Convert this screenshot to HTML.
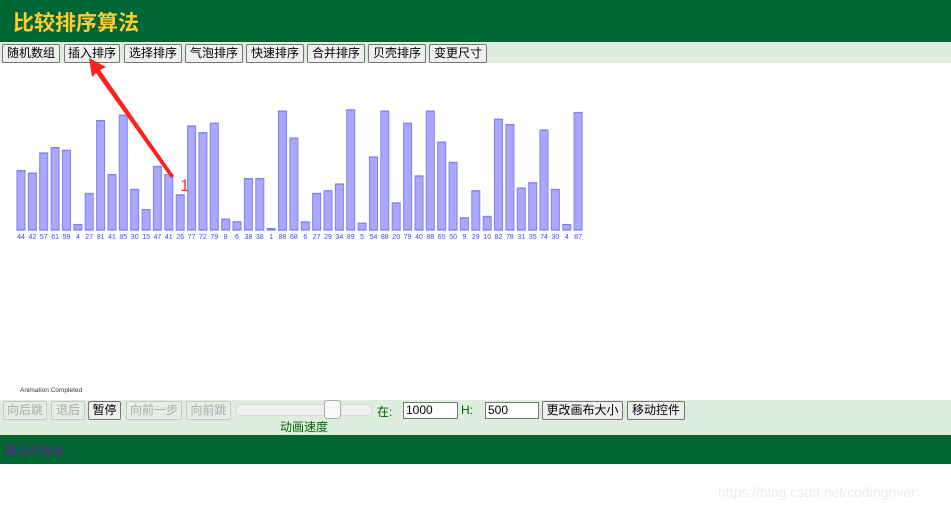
<!DOCTYPE html>
<html><head><meta charset="utf-8"><style>
body{margin:0;width:951px;height:511px;background:#fff;font-family:"Liberation Sans","Noto Sans CJK SC",sans-serif;position:relative;overflow:hidden}
.hd{position:absolute;left:0;top:0;width:951px;height:42px;background:#006633}
.hd h1{margin:0;position:absolute;left:13px;top:7px;font-size:21px;color:#ffcc33;font-weight:bold;letter-spacing:0}
.tb{position:absolute;left:0;top:42px;width:951px;height:21px;background:#ddeedd}
.b{position:absolute;height:19px;box-sizing:border-box;border:1px solid #767676;border-radius:2px;background:#efefef;font-size:12px;line-height:17px;text-align:center;color:#000;padding:0}
.dis{color:#aaa;border-color:#c8c8c8;background:#e6ece6}
.cb{position:absolute;left:0;top:400px;width:951px;height:35px;background:#ddeedd}
.ft{position:absolute;left:0;top:435px;width:951px;height:29px;background:#006633}
.in{position:absolute;height:17px;box-sizing:border-box;border:1px solid #767676;background:#fff;font-size:12px;line-height:15px;padding-left:2px}
</style></head><body>
<div class="hd"><h1>比较排序算法</h1></div>
<div class="tb">
<div class="b" style="left:2px;top:2px;width:58px">随机数组</div>
<div class="b" style="left:64px;top:2px;width:56px">插入排序</div>
<div class="b" style="left:124px;top:2px;width:58px">选择排序</div>
<div class="b" style="left:185px;top:2px;width:58px">气泡排序</div>
<div class="b" style="left:246px;top:2px;width:58px">快速排序</div>
<div class="b" style="left:307px;top:2px;width:58px">合并排序</div>
<div class="b" style="left:368px;top:2px;width:58px">贝壳排序</div>
<div class="b" style="left:429px;top:2px;width:58px">变更尺寸</div>
</div>
<svg style="position:absolute;left:0;top:0" width="951" height="400">
<g transform="translate(0,230) scale(1,-1.35)" fill="#a8a8ff" stroke="#8080f0" stroke-width="1" vector-effect="non-scaling-stroke">
<rect x="17" y="0" width="8" height="44"/><rect x="28.4" y="0" width="8" height="42"/><rect x="39.7" y="0" width="8" height="57"/><rect x="51.1" y="0" width="8" height="61"/><rect x="62.5" y="0" width="8" height="59"/><rect x="73.9" y="0" width="8" height="4"/><rect x="85.2" y="0" width="8" height="27"/><rect x="96.6" y="0" width="8" height="81"/><rect x="108" y="0" width="8" height="41"/><rect x="119.3" y="0" width="8" height="85"/><rect x="130.7" y="0" width="8" height="30"/><rect x="142.1" y="0" width="8" height="15"/><rect x="153.4" y="0" width="8" height="47"/><rect x="164.8" y="0" width="8" height="41"/><rect x="176.2" y="0" width="8" height="26"/><rect x="187.6" y="0" width="8" height="77"/><rect x="198.9" y="0" width="8" height="72"/><rect x="210.3" y="0" width="8" height="79"/><rect x="221.7" y="0" width="8" height="8"/><rect x="233" y="0" width="8" height="6"/><rect x="244.4" y="0" width="8" height="38"/><rect x="255.8" y="0" width="8" height="38"/><rect x="267.1" y="0" width="8" height="1"/><rect x="278.5" y="0" width="8" height="88"/><rect x="289.9" y="0" width="8" height="68"/><rect x="301.3" y="0" width="8" height="6"/><rect x="312.6" y="0" width="8" height="27"/><rect x="324" y="0" width="8" height="29"/><rect x="335.4" y="0" width="8" height="34"/><rect x="346.7" y="0" width="8" height="89"/><rect x="358.1" y="0" width="8" height="5"/><rect x="369.5" y="0" width="8" height="54"/><rect x="380.8" y="0" width="8" height="88"/><rect x="392.2" y="0" width="8" height="20"/><rect x="403.6" y="0" width="8" height="79"/><rect x="415" y="0" width="8" height="40"/><rect x="426.3" y="0" width="8" height="88"/><rect x="437.7" y="0" width="8" height="65"/><rect x="449.1" y="0" width="8" height="50"/><rect x="460.4" y="0" width="8" height="9"/><rect x="471.8" y="0" width="8" height="29"/><rect x="483.2" y="0" width="8" height="10"/><rect x="494.5" y="0" width="8" height="82"/><rect x="505.9" y="0" width="8" height="78"/><rect x="517.3" y="0" width="8" height="31"/><rect x="528.7" y="0" width="8" height="35"/><rect x="540" y="0" width="8" height="74"/><rect x="551.4" y="0" width="8" height="30"/><rect x="562.8" y="0" width="8" height="4"/><rect x="574.1" y="0" width="8" height="87"/>
</g>
<g font-size="7" fill="#4040ff" text-anchor="middle" font-family="Liberation Sans,sans-serif">
<text x="21" y="239">44</text><text x="32.4" y="239">42</text><text x="43.7" y="239">57</text><text x="55.1" y="239">61</text><text x="66.5" y="239">59</text><text x="77.9" y="239">4</text><text x="89.2" y="239">27</text><text x="100.6" y="239">81</text><text x="112" y="239">41</text><text x="123.3" y="239">85</text><text x="134.7" y="239">30</text><text x="146.1" y="239">15</text><text x="157.4" y="239">47</text><text x="168.8" y="239">41</text><text x="180.2" y="239">26</text><text x="191.6" y="239">77</text><text x="202.9" y="239">72</text><text x="214.3" y="239">79</text><text x="225.7" y="239">8</text><text x="237" y="239">6</text><text x="248.4" y="239">38</text><text x="259.8" y="239">38</text><text x="271.1" y="239">1</text><text x="282.5" y="239">88</text><text x="293.9" y="239">68</text><text x="305.3" y="239">6</text><text x="316.6" y="239">27</text><text x="328" y="239">29</text><text x="339.4" y="239">34</text><text x="350.7" y="239">89</text><text x="362.1" y="239">5</text><text x="373.5" y="239">54</text><text x="384.8" y="239">88</text><text x="396.2" y="239">20</text><text x="407.6" y="239">79</text><text x="419" y="239">40</text><text x="430.3" y="239">88</text><text x="441.7" y="239">65</text><text x="453.1" y="239">50</text><text x="464.4" y="239">9</text><text x="475.8" y="239">29</text><text x="487.2" y="239">10</text><text x="498.5" y="239">82</text><text x="509.9" y="239">78</text><text x="521.3" y="239">31</text><text x="532.7" y="239">35</text><text x="544" y="239">74</text><text x="555.4" y="239">30</text><text x="566.8" y="239">4</text><text x="578.1" y="239">87</text>
</g>
<polygon points="89,58 106,67 100,70 174,176 171,178 96,73 92,77" fill="#ff2020"/>
<text x="180" y="191" font-size="17" fill="#ff3030" font-family="Liberation Sans,sans-serif">1</text>
<text x="20" y="392" font-size="6.5" fill="#333" font-family="Liberation Sans,sans-serif">Animation Completed</text>
</svg>
<div class="cb">
<div class="b dis" style="left:3px;top:1px;width:44px">向后跳</div>
<div class="b dis" style="left:51px;top:1px;width:34px">退后</div>
<div class="b" style="left:88px;top:1px;width:33px">暂停</div>
<div class="b dis" style="left:126px;top:1px;width:56px">向前一步</div>
<div class="b dis" style="left:186px;top:1px;width:45px">向前跳</div>
<div style="position:absolute;left:236px;top:4px;width:134px;height:10px;background:#efefef;border:1px solid #d8d8d8;border-radius:3px"></div>
<div style="position:absolute;left:324px;top:0px;width:15px;height:17px;background:#f8f8f8;border:1px solid #aaa;border-radius:3px"></div>
<div style="position:absolute;left:280px;top:18px;font-size:12px;color:#006600">动画速度</div>
<div style="position:absolute;left:377px;top:3px;font-size:12px;color:#006600">在:</div>
<div class="in" style="left:403px;top:2px;width:55px">1000</div>
<div style="position:absolute;left:461px;top:3px;font-size:12px;color:#006600">H:</div>
<div class="in" style="left:485px;top:2px;width:54px">500</div>
<div class="b" style="left:542px;top:1px;width:81px">更改画布大小</div>
<div class="b" style="left:627px;top:1px;width:58px">移动控件</div>
</div>
<div class="ft"><div style="position:absolute;left:5px;top:7px;font-size:12px;color:#6a1b9a">算法可视化</div></div>
<div style="position:absolute;left:718px;top:484px;font-size:14px;color:#ececec">https://blog.csdn.net/codingriver</div>
</body></html>
